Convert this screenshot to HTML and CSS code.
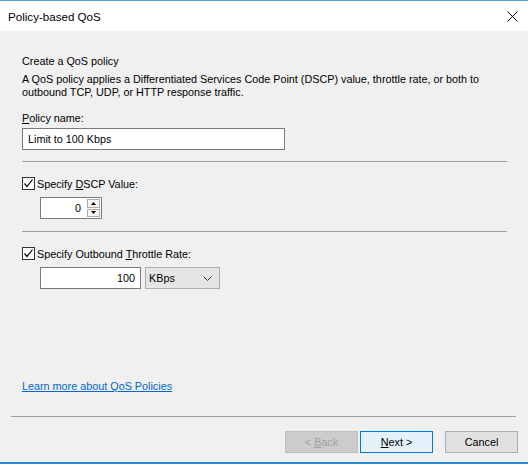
FILE: index.html
```html
<!DOCTYPE html>
<html>
<head>
<meta charset="utf-8">
<link rel="stylesheet" href="styles.css">
</head>
<body>
<div class="window">
  <div class="titlebar">
    <span class="title">Policy-based QoS</span>
    <svg class="close" width="11" height="11" viewBox="0 0 11 11"><path d="M0.5 0.5 L10.5 10.5 M10.5 0.5 L0.5 10.5" stroke="#000" stroke-width="1" fill="none"/></svg>
  </div>
  <div class="content">
    <div class="heading">Create a QoS policy</div>
    <div class="desc">A QoS policy applies a Differentiated Services Code Point (DSCP) value, throttle rate, or both to outbound TCP, UDP, or HTTP response traffic.</div>
    <div class="label"><u>P</u>olicy name:</div>
    <div class="textbox name">Limit to 100 Kbps</div>
    <div class="sep"></div>
    <div class="check-row first">
      <span class="checkbox"><svg width="11" height="11" viewBox="0 0 11 11"><path d="M1.5 5.5 L4 8.5 L9.5 1.5" stroke="#000" stroke-width="1.2" fill="none"/></svg></span>
      <span>Specify <u>D</u>SCP Value:</span>
    </div>
    <div class="field-row">
      <div class="textbox spin">
        <span class="spin-val">0</span>
        <span class="spin-btns">
          <span class="spin-btn"><svg width="5" height="3" viewBox="0 0 5 3"><path d="M0 3 L2.5 0 L5 3 Z" fill="#000"/></svg></span>
          <span class="spin-btn"><svg width="5" height="3" viewBox="0 0 5 3"><path d="M0 0 L5 0 L2.5 3 Z" fill="#000"/></svg></span>
        </span>
      </div>
    </div>
    <div class="sep second"></div>
    <div class="check-row">
      <span class="checkbox"><svg width="11" height="11" viewBox="0 0 11 11"><path d="M1.5 5.5 L4 8.5 L9.5 1.5" stroke="#000" stroke-width="1.2" fill="none"/></svg></span>
      <span>Specify Outbound <u>T</u>hrottle Rate:</span>
    </div>
    <div class="field-row">
      <div class="textbox rate">100</div>
      <div class="combo"><span>KBps</span><svg width="9" height="5" viewBox="0 0 9 5"><path d="M0.5 0.5 L4.5 4.5 L8.5 0.5" stroke="#333" stroke-width="1" fill="none"/></svg></div>
    </div>
    <div class="spacer"></div>
    <a class="link" href="#">Learn more about QoS Policies</a>
    <div class="sep bottom"></div>
    <div class="buttons">
      <div class="btn disabled">&lt; <u>B</u>ack</div>
      <div class="btn default"><u>N</u>ext &gt;</div>
      <div class="btn cancel">Cancel</div>
    </div>
  </div>
</div>
</body>
</html>
```
FILE: styles.css
```css
html, body {
  margin: 0;
  padding: 0;
}
body {
  width: 528px;
  height: 464px;
  overflow: hidden;
  font-family: "Liberation Sans", Arial, sans-serif;
  font-size: 10.8px;
  color: #000;
  background: #f0f0f0;
}
.window {
  width: 528px;
  height: 464px;
  box-sizing: border-box;
  border-top: 1px solid #4a9edb;
  border-bottom: 2px solid #2c8ad6;
  display: flex;
  flex-direction: column;
  background: #f0f0f0;
}
.titlebar {
  height: 30px;
  background: #fff;
  display: flex;
  align-items: center;
  justify-content: space-between;
  padding: 0 10px 0 8px;
  flex: none;
}
.title {
  font-size: 11.6px;
  padding-top: 1px;
}
.content {
  flex: 1;
  display: flex;
  flex-direction: column;
  padding: 23px 0 0 22px;
}
.heading {
  line-height: 15px;
}
.desc {
  line-height: 13px;
  margin-top: 4px;
  width: 490px;
}
.label {
  line-height: 15px;
  margin-top: 12px;
}
.textbox {
  box-sizing: border-box;
  background: #fff;
  border: 1px solid #7a7a7a;
  height: 22px;
  line-height: 20px;
}
.name {
  width: 263px;
  margin-top: 2px;
  padding-left: 5px;
}
.sep {
  width: 485px;
  height: 1px;
  background: #a0a0a0;
  margin-top: 11px;
}
.sep.second {
  margin-top: 12px;
}
.check-row {
  display: flex;
  align-items: center;
  height: 15px;
  margin-top: 14px;
}
.checkbox {
  box-sizing: border-box;
  width: 13px;
  height: 13px;
  border: 1px solid #333;
  background: #fff;
  display: flex;
  align-items: center;
  justify-content: center;
  margin-right: 2px;
}
.field-row {
  display: flex;
  margin-top: 6px;
  padding-left: 18px;
  gap: 4px;
}
.spin {
  width: 62px;
  display: flex;
  justify-content: flex-end;
  padding: 1px;
}
.spin-val {
  line-height: 18px;
  padding-right: 6px;
}
.spin-btns {
  display: flex;
  flex-direction: column;
  gap: 1px;
  width: 13px;
}
.spin-btn {
  box-sizing: border-box;
  flex: 1;
  background: #f5f5f5;
  border: 1px solid #acacac;
  display: flex;
  align-items: center;
  justify-content: center;
}
.rate {
  width: 101px;
  text-align: right;
  padding-right: 5px;
}
.combo {
  box-sizing: border-box;
  width: 75px;
  height: 22px;
  background: #e5e5e5;
  border: 1px solid #adadad;
  display: flex;
  align-items: center;
  justify-content: space-between;
  padding: 0 7px 0 3px;
}
.spacer {
  flex: 1;
}
.link {
  color: #0066cc;
  text-decoration: underline;
  line-height: 15px;
  align-self: flex-start;
}
.sep.bottom {
  width: 505px;
  margin: 22px 0 0 -11px;
}
.buttons {
  display: flex;
  justify-content: flex-end;
  padding-right: 10px;
  margin-top: 14px;
  margin-bottom: 9px;
}
.btn {
  box-sizing: border-box;
  width: 73px;
  height: 22px;
  line-height: 20px;
  text-align: center;
  border: 1px solid #adadad;
  background: #e1e1e1;
}
.btn.disabled {
  background: #cccccc;
  border-color: #bfbfbf;
  color: #a0a0a0;
}
.btn.default {
  margin-left: 2px;
  border-color: #0078d7;
  background: #e5f1fb;
}
.btn.cancel {
  margin-left: 12px;
}
```
